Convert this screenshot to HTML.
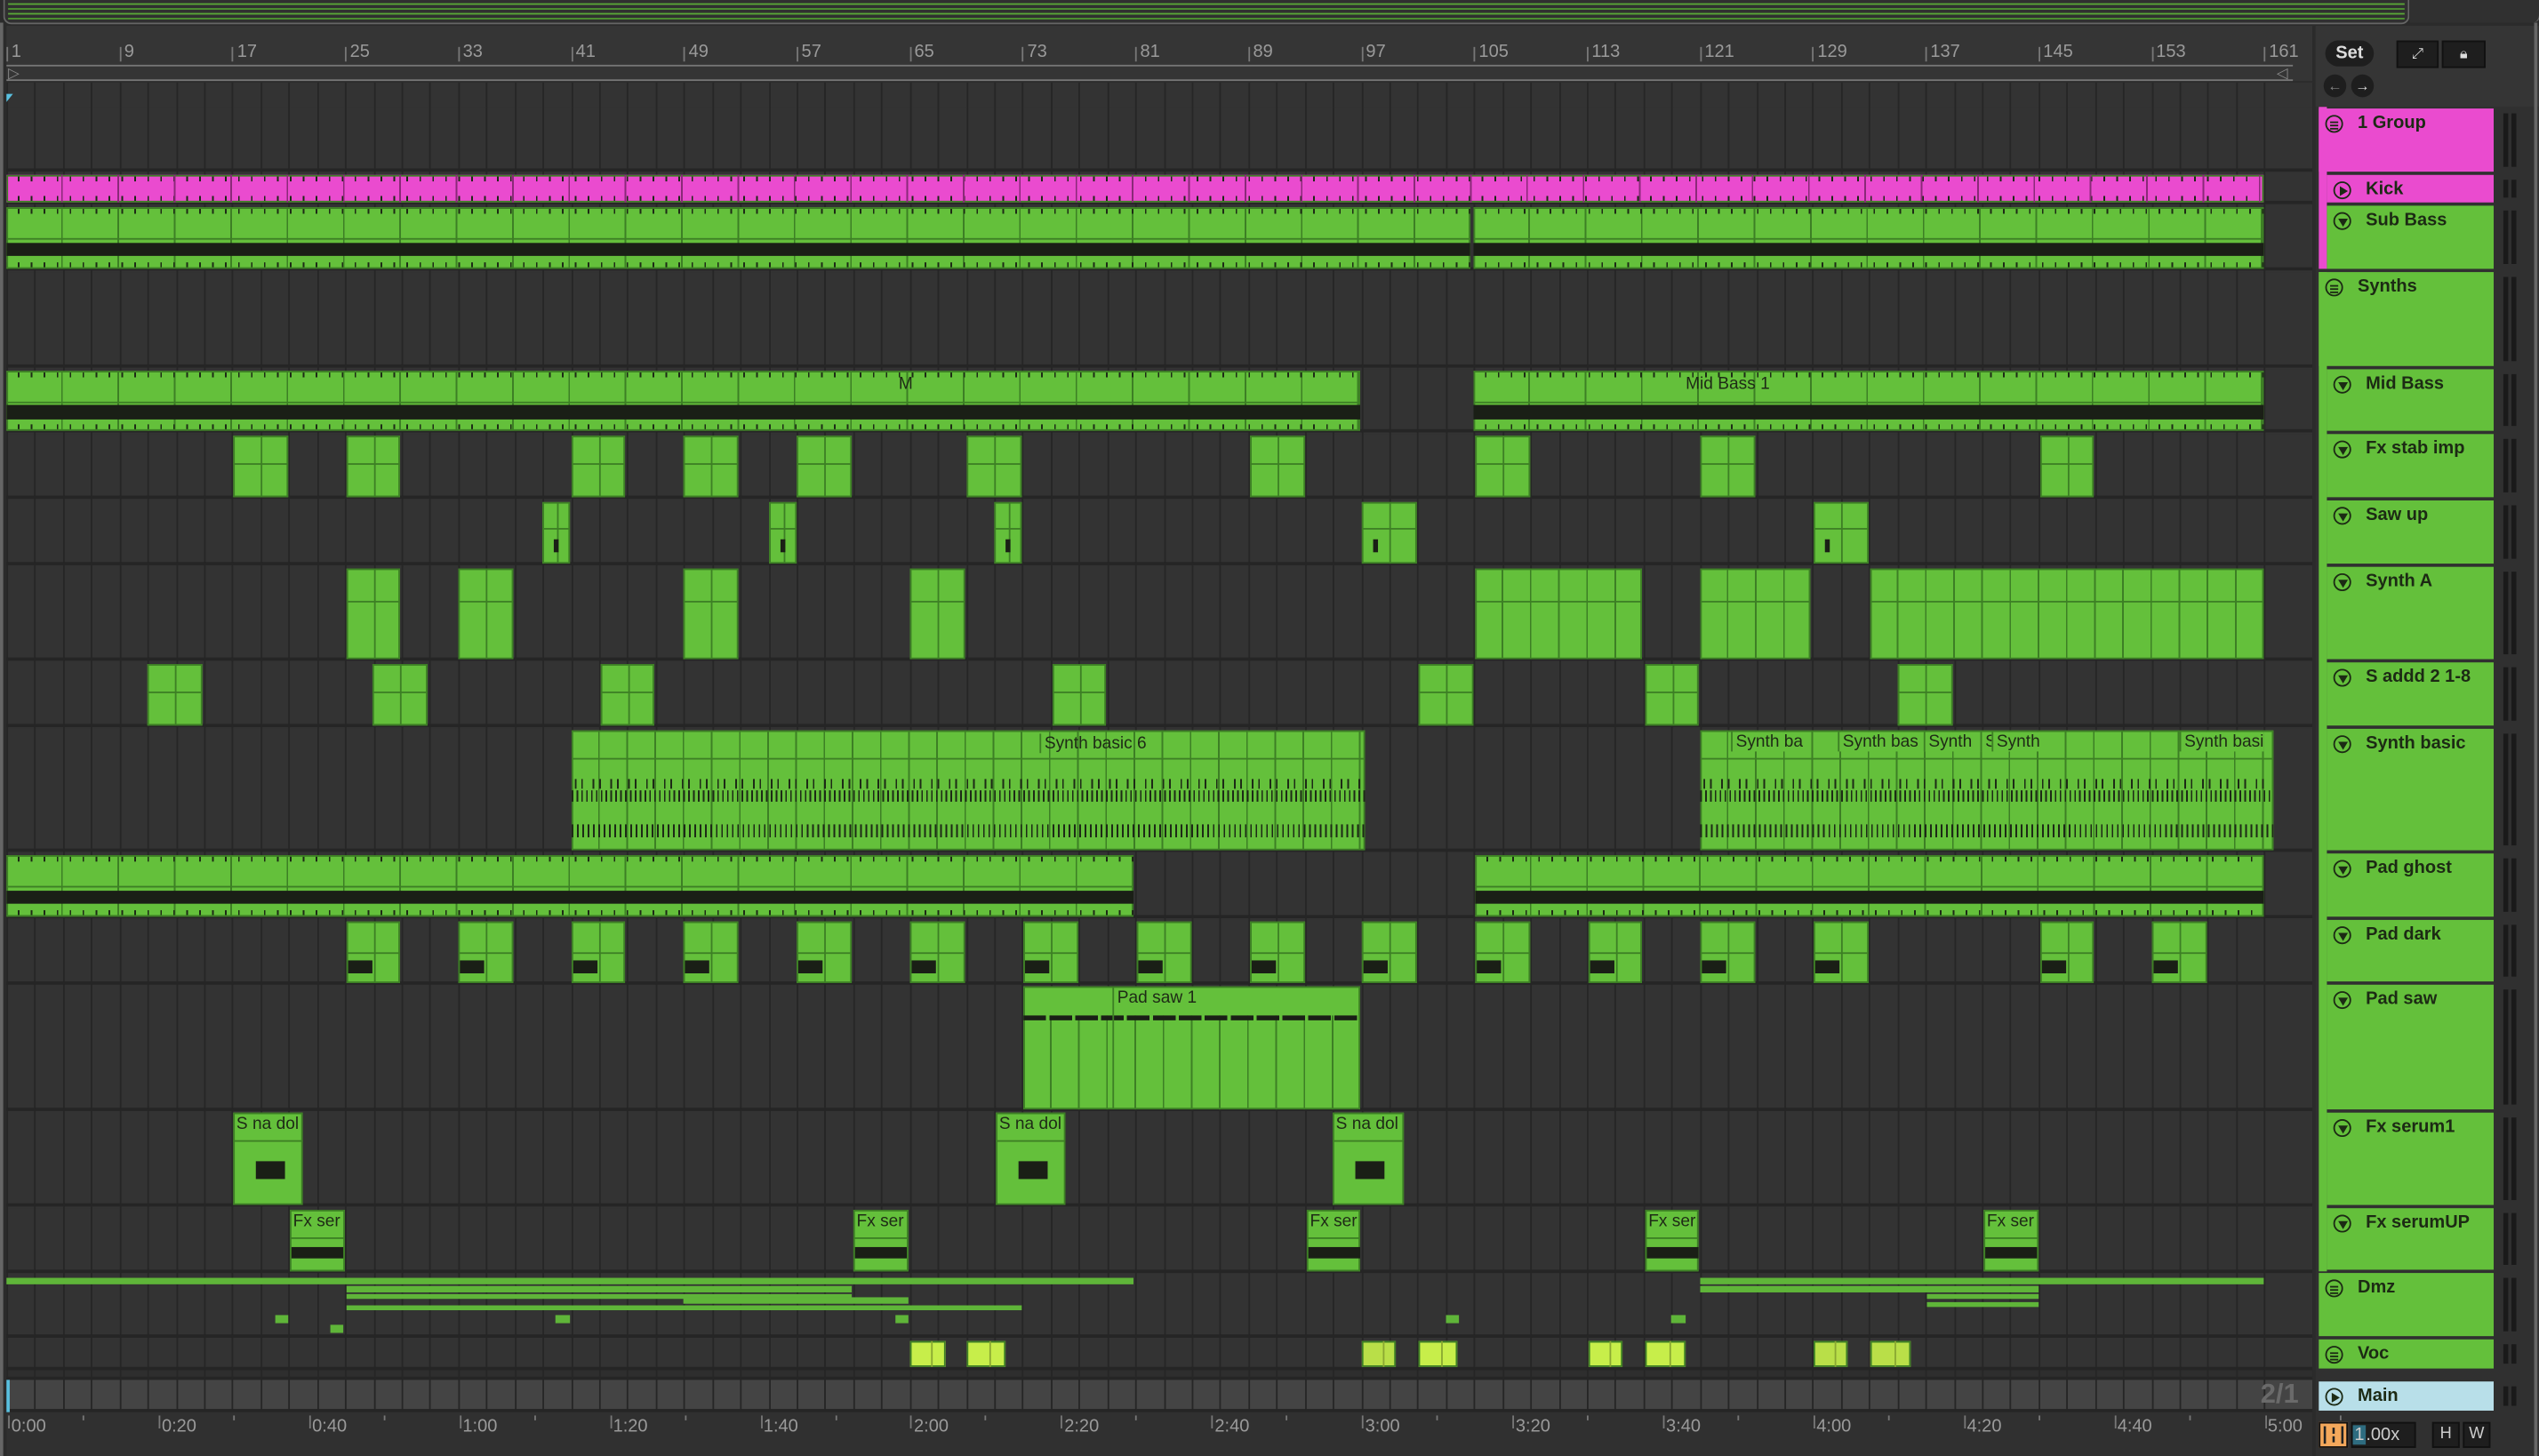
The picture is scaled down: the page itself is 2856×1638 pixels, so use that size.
<!DOCTYPE html>
<html><head><meta charset="utf-8">
<style>
html,body{margin:0;padding:0;background:#2b2b2b;overflow:hidden;width:2856px;height:1638px;}
#s{position:absolute;left:0;top:0;width:1568px;height:899px;transform-origin:0 0;transform:scale(1.82143,1.8220);background:#2b2b2b;font-family:"Liberation Sans",sans-serif;}
.a{position:absolute;}
.clip{position:absolute;background:#64c03b;box-shadow:inset 0 0 0 1px #3d7f25;overflow:hidden;}
.lbl{position:absolute;left:2px;top:1px;font-size:10.5px;color:#1e2a16;white-space:nowrap;}
.hd{position:absolute;font-size:11px;font-weight:bold;color:#1c2a14;white-space:nowrap;}
.ic{position:absolute;width:11px;height:11px;border:1.3px solid #1c2a14;border-radius:50%;box-sizing:border-box;}
.rn{position:absolute;top:26px;font-size:11px;color:#9a9a9a;}
.tn{position:absolute;top:875px;font-size:11px;color:#9a9a9a;}
.m{position:absolute;background:#1a1a1a;width:3px;}
</style></head><body>
<div id="s">
<!-- overview -->
<div class="a" style="left:2px;top:0;width:1484px;height:14px;border:1.5px solid #666;border-top:none;border-radius:0 0 5px 5px;background:#303030;overflow:hidden">
 <div class="a" style="left:2px;top:2px;width:1480px;height:1px;background:#5aa838"></div>
 <div class="a" style="left:2px;top:5px;width:1480px;height:1px;background:#4e9530"></div>
 <div class="a" style="left:2px;top:8px;width:1480px;height:1px;background:#5aa838"></div>
 <div class="a" style="left:2px;top:11px;width:1480px;height:1px;background:#4e9530"></div>
</div>
<div class="a" style="left:1488px;top:0;width:80px;height:14px;border-right:1.5px solid #666;border-radius:0 0 5px 0;background:#303030"></div>
<!-- ruler -->
<div class="a" style="left:4px;top:16px;width:1424px;height:34px;background:#353535"></div>
<div id="ruler"></div>
<div class="a" style="left:4px;top:40px;width:1412px;height:10px;border-top:1px solid #777;border-bottom:1px solid #777;box-sizing:border-box"></div>
<div class="a" style="left:5px;top:40px;font-size:9px;color:#888;line-height:10px">▷</div>
<div class="a" style="left:1406px;top:40px;font-size:9px;color:#888;line-height:10px">◁</div>
<!-- arrangement bg -->
<div id="arr" class="a" style="left:4px;top:51px;width:1424px;height:821px;background:#333"></div>
<div class="a" style="left:4px;top:58px;width:0;height:0;border-left:4px solid #59c0e0;border-bottom:5px solid transparent"></div>
<div id="clips"></div>
<!-- right panel -->
<div class="a" style="left:1430px;top:16px;width:138px;height:50px;background:#353535"></div>
<div class="a" style="left:1436px;top:25px;width:30px;height:16px;border-radius:8px;background:#1e1e1e;color:#ddd;font-size:11px;text-align:center;line-height:16px;font-weight:bold">Set</div>
<div class="a" style="left:1480px;top:25px;width:24px;height:15px;background:#1e1e1e;border:1px solid #111;color:#ddd;font-size:9px;text-align:center;line-height:15px">⤢</div>
<div class="a" style="left:1508px;top:25px;width:25px;height:15px;background:#1e1e1e;border:1px solid #111;color:#ddd;font-size:9px;text-align:center;line-height:15px">🔒︎</div>
<div class="a" style="left:1435px;top:46px;width:14px;height:14px;border-radius:50%;background:#1e1e1e;color:#888;font-size:9px;text-align:center;line-height:14px">←</div>
<div class="a" style="left:1452px;top:46px;width:14px;height:14px;border-radius:50%;background:#1e1e1e;color:#ddd;font-size:9px;text-align:center;line-height:14px">→</div>
<div id="hdrs"></div>
<!-- bottom -->
<div class="a" style="left:4px;top:872px;width:1424px;height:27px;background:#303030"></div>
<div id="time"></div>
<div class="a" style="left:1396px;top:851px;font-size:17px;font-weight:bold;color:#6a6a6a">2/1</div>
<div class="a" style="left:1432px;top:878px;width:16px;height:14px;background:#f4a85b;border:1px solid #111;color:#222;font-size:9px;text-align:center;line-height:14px">┃╏┃</div>
<div class="a" style="left:1452px;top:878px;width:38px;height:14px;background:#1e1e1e;border:1px solid #111;color:#ccc;font-size:11px;line-height:14px"><span style="background:#2e6c80;padding:0 1px">1</span>.00x</div>
<div class="a" style="left:1502px;top:878px;width:15px;height:14px;background:#1e1e1e;border:1px solid #111;color:#ccc;font-size:10px;text-align:center;line-height:14px">H</div>
<div class="a" style="left:1521px;top:878px;width:15px;height:14px;background:#1e1e1e;border:1px solid #111;color:#ccc;font-size:10px;text-align:center;line-height:14px">W</div>
<div class="a" style="left:1565px;top:14px;width:2px;height:885px;background:#666"></div>
<div class="a" style="left:0;top:14px;width:2px;height:885px;background:#666"></div>
</div>
<script>
function X(b){return 8+(b-1)*8.714;}
var H='';
// ruler numbers
[1,9,17,25,33,41,49,57,65,73,81,89,97,105,113,121,129,137,145,153,161].forEach(function(n){var x=X(n)-4;
H+='<div class="a" style="left:'+x+'px;top:29px;width:1px;height:9px;background:#777"></div><div class="rn" style="left:'+(x+3)+'px">'+n+'</div>';});
document.getElementById('ruler').innerHTML=H;
// rows
var rows=[[66,106],[107,126],[127,167],[168,227],[228,267],[268,308],[309,349],[350,408],[409,449],[450,526],[527,567],[568,608],[608,686],[686,745],[746,786],[786,826],[826,846],[846,852],[852,872]];
H='';
for(var i=0;i<rows.length;i++){var r=rows[i];var bg=(i==18)?'#444':(i==17?'#2e2e2e':'#333');
H+='<div class="a" style="left:0;top:'+(r[0]-51)+'px;width:1424px;height:'+(r[1]-r[0]-2)+'px;background:'+bg+'"></div>';}
for(var g=1;g<=161;g+=2){var x=X(g)-4-4;H+='<div class="a" style="left:'+x+'px;top:0;width:1px;height:821px;background:#262626"></div>';}
for(var i=0;i<rows.length;i++){H+='<div class="a" style="left:0;top:'+(rows[i][1]-53)+'px;width:1424px;height:2px;background:#252525"></div>';}
document.getElementById('arr').innerHTML=H;
// clips
H='';
function clip(x1,x2,y1,y2,col,inner,lab,lx){H+='<div class="clip" style="left:'+x1+'px;top:'+y1+'px;width:'+(x2-x1)+'px;height:'+(y2-y1)+'px;background:'+(col||'#64c03b')+'">'+(inner||'')+(lab?'<div class="lbl" style="left:'+(lx||2)+'px">'+lab+'</div>':'')+'</div>';}
var ticks='background-image:repeating-linear-gradient(90deg,transparent 0,transparent 7px,#1d2a16 7px,#1d2a16 8px);';
var bars='<div class="a" style="left:0;top:0;width:100%;height:100%;background-image:repeating-linear-gradient(90deg,transparent 0,transparent 33.8px,#3d7f25 33.8px,#3d7f25 34.8px)"></div>';
function bass(x1,x2,y1,y2){var h=y2-y1;
clip(x1,x2,y1,y2,null,bars+'<div class="a" style="left:0;top:'+(h*0.58)+'px;width:100%;height:'+(h*0.22)+'px;background:#1a1f16"></div><div class="a" style="left:0;top:'+(h*0.5)+'px;width:100%;height:1px;background:#3d7f25"></div><div class="a" style="left:0;top:1px;width:100%;height:3px;'+ticks+'"></div><div class="a" style="left:0;bottom:1px;width:100%;height:3px;'+ticks+'"></div>');}
clip(4,1398,108,125,'#ea4bcf','<div class="a" style="left:0;top:1px;width:100%;height:3px;'+ticks+'"></div><div class="a" style="left:0;bottom:1px;width:100%;height:3px;'+ticks+'"></div>'+bars.replace(/#3d7f25/g,'#8a2a78'));
bass(4,908,128,166);bass(910,1398,128,166);
bass(4,840,229,266);bass(910,1398,229,266);
H+='<div class="lbl" style="position:absolute;left:555px;top:231px">M</div><div class="lbl" style="position:absolute;left:1041px;top:231px">Mid Bass 1</div>';
function blocks(list,y1,y2,inn){list.forEach(function(b){clip(b[0],b[1],y1,y2,null,'<div class="a" style="left:'+((b[1]-b[0])/2)+'px;top:0;width:1px;height:100%;background:#3d7f25"></div>'+(inn?inn:''));});}
blocks([[144,178],[214,247],[353,386],[422,456],[492,526],[597,631],[772,806],[911,945],[1050,1084],[1260,1293]],269,307,'<div class="a" style="left:0;top:17px;width:100%;height:1px;background:#3d7f25"></div>');
blocks([[335,352],[475,492],[614,631],[841,875],[1120,1154]],310,348,'<div class="a" style="left:7px;top:23px;width:3px;height:8px;background:#1a1f16"></div><div class="a" style="left:0;top:16px;width:100%;height:1px;background:#3d7f25"></div>');
blocks([[214,247],[283,317],[422,456],[562,596]],351,407,'<div class="a" style="left:0;top:20px;width:100%;height:1px;background:#3d7f25"></div>');
[[911,1014],[1050,1118],[1155,1398]].forEach(function(b){clip(b[0],b[1],351,407,null,'<div class="a" style="left:0;top:0;width:100%;height:100%;background-image:repeating-linear-gradient(90deg,transparent 0,transparent 16.4px,#3d7f25 16.4px,#3d7f25 17.4px)"></div><div class="a" style="left:0;top:20px;width:100%;height:1px;background:#3d7f25"></div>');});
blocks([[91,125],[230,264],[371,404],[650,683],[876,910],[1016,1049],[1172,1206]],410,448,'<div class="a" style="left:0;top:17px;width:100%;height:1px;background:#3d7f25"></div>');
var sb='<div class="a" style="left:0;top:17px;width:100%;height:1px;background:#3d7f25"></div><div class="a" style="left:0;top:0;width:100%;height:100%;background-image:repeating-linear-gradient(90deg,transparent 0,transparent 16.4px,#3d7f25 16.4px,#3d7f25 17.4px)"></div>'+
'<div class="a" style="left:2px;top:30px;width:100%;height:6px;background-image:repeating-linear-gradient(90deg,#1d2a16 0,#1d2a16 1px,transparent 1px,transparent 4px,#1d2a16 4px,#1d2a16 5px,transparent 5px,transparent 11px)"></div>'+
'<div class="a" style="left:0;top:37px;width:100%;height:7px;background-image:repeating-linear-gradient(90deg,#1d2a16 0,#1d2a16 1px,transparent 1px,transparent 3px)"></div>'+
'<div class="a" style="left:0;top:58px;width:100%;height:8px;background-image:repeating-linear-gradient(90deg,#1d2a16 0,#1d2a16 1px,transparent 1px,transparent 3.3px)"></div>';
clip(353,843,451,525,null,sb);
H+='<div class="lbl" style="position:absolute;left:642px;top:453px;border-left:1px solid #3d7f25;padding-left:2px">Synth basic 6</div>';
clip(1050,1404,451,525,null,sb);
[[1069,'Synth ba'],[1135,'Synth bas'],[1188,'Synth'],[1223,'S'],[1230,'Synth'],[1346,'Synth basi']].forEach(function(l){H+='<div class="lbl" style="position:absolute;left:'+l[0]+'px;top:452px;border-left:1px solid #3d7f25;padding-left:2px;background:#64c03b">'+l[1]+'</div>';});
bass(4,700,528,566);bass(911,1398,528,566);
blocks([[214,247],[283,317],[353,386],[422,456],[492,526],[562,596],[632,666],[702,736],[772,806],[841,875],[911,945],[981,1014],[1050,1084],[1120,1154],[1260,1293],[1329,1363]],569,607,'<div class="a" style="left:1px;top:24px;width:15px;height:8px;background:#1a1f16"></div><div class="a" style="left:0;top:19px;width:100%;height:1px;background:#3d7f25"></div>');
clip(632,840,609,685,null,'<div class="a" style="left:0;top:0;width:100%;height:100%;background-image:repeating-linear-gradient(90deg,transparent 0,transparent 16.4px,#3d7f25 16.4px,#3d7f25 17.4px);top:18px"></div><div class="a" style="left:0;top:18px;width:100%;height:3px;background-image:repeating-linear-gradient(90deg,#1a1f16 0,#1a1f16 14px,transparent 14px,transparent 16px)"></div><div class="a" style="left:55px;top:0;width:1px;height:100%;background:#3d7f25"></div>','Pad saw 1',58);
[[144,187],[615,658],[823,867]].forEach(function(b){clip(b[0],b[1],687,744,null,'<div class="a" style="left:0;top:17px;width:100%;height:1px;background:#3d7f25"></div><div class="a" style="left:14px;top:30px;width:18px;height:11px;background:#1a1f16"></div>','S na dol');});
[[179,213],[527,561],[807,840],[1016,1049],[1225,1259]].forEach(function(b){clip(b[0],b[1],747,785,null,'<div class="a" style="left:0;top:17px;width:100%;height:1px;background:#3d7f25"></div><div class="a" style="left:1px;top:23px;width:32px;height:7px;background:#1a1f16"></div>','Fx ser');});
function ln(x1,x2,y,h,c){H+='<div class="a" style="left:'+x1+'px;top:'+y+'px;width:'+(x2-x1)+'px;height:'+h+'px;background:'+(c||'#5fb539')+'"></div>';}
ln(4,700,789,4);ln(1050,1398,789,4);ln(214,526,794,4);ln(214,526,799,3);ln(422,561,801,4);ln(214,631,806,3);ln(1050,1259,794,4);ln(1190,1259,799,3);ln(1190,1259,804,3);
ln(170,178,812,5);ln(204,212,818,5);ln(343,352,812,5);ln(553,561,812,5);ln(893,901,812,5);ln(1032,1041,812,5);
[[562,584,'#c7ee4a'],[597,621,'#c7ee4a'],[841,862,'#b9df48'],[876,900,'#c7ee4a'],[981,1002,'#c7ee4a'],[1016,1041,'#c7ee4a'],[1120,1141,'#b9df48'],[1155,1180,'#b9df48']].forEach(function(b){clip(b[0],b[1],828,844,b[2],'<div class="a" style="left:'+((b[1]-b[0])*0.6)+'px;top:0;width:1px;height:100%;background:#8aa832"></div>');});
H+='<div class="a" style="left:4px;top:852px;width:2px;height:20px;background:#59c0e0"></div>';
document.getElementById('clips').innerHTML=H;
// headers
H='';
var P='#ea4bcf',G='#64c03b';
function hdr(x,y1,y2,col,name,icon){H+='<div class="a" style="left:'+x+'px;top:'+y1+'px;width:'+(1540-x)+'px;height:'+(y2-y1-2)+'px;background:'+col+'"></div>';
var ic=icon=='g'?'<div style="position:absolute;left:2px;top:2.5px;width:5px;height:1px;background:#1c2a14;box-shadow:0 2px 0 #1c2a14,0 4px 0 #1c2a14"></div>':icon=='p'?'<div style="position:absolute;left:3px;top:1.5px;border-left:5px solid #1c2a14;border-top:3px solid transparent;border-bottom:3px solid transparent"></div>':'<div style="position:absolute;left:1.5px;top:2.5px;border-top:5px solid #1c2a14;border-left:3px solid transparent;border-right:3px solid transparent"></div>';
H+='<div class="ic" style="left:'+(x+4)+'px;top:'+(y1+4)+'px">'+ic+'</div><div class="hd" style="left:'+(x+(icon=="g"?24:24))+'px;top:'+(y1+3)+'px">'+name+'</div>';
H+='<div class="m" style="left:1546px;top:'+(y1+3)+'px;height:'+(y2-y1-8)+'px"></div><div class="m" style="left:1551px;top:'+(y1+3)+'px;height:'+(y2-y1-8)+'px"></div>';}
H+='<div class="a" style="left:1430px;top:66px;width:138px;height:833px;background:#303030"></div>';
H+='<div class="a" style="left:1432px;top:66px;width:5px;height:100px;background:'+P+'"></div>';
H+='<div class="a" style="left:1432px;top:168px;width:5px;height:617px;background:'+G+'"></div>';
hdr(1432,67,108,P,'1 Group','g');hdr(1437,108,127,P,'Kick','p');hdr(1437,127,168,G,'Sub Bass','t');
hdr(1432,168,228,G,'Synths','g');
[[228,268,'Mid Bass'],[268,309,'Fx stab imp'],[309,350,'Saw up'],[350,409,'Synth A'],[409,450,'S addd 2 1-8'],[450,527,'Synth basic'],[527,568,'Pad ghost'],[568,608,'Pad dark'],[608,687,'Pad saw'],[687,746,'Fx serum1'],[746,786,'Fx serumUP']].forEach(function(r){hdr(1437,r[0],r[1],G,r[2],'t');});
hdr(1432,786,827,G,'Dmz','g');hdr(1432,827,847,G,'Voc','g');
hdr(1432,853,873,'#b8dfe9','Main','p');
document.getElementById('hdrs').innerHTML=H;
// time
H='';
['0:00','0:20','0:40','1:00','1:20','1:40','2:00','2:20','2:40','3:00','3:20','3:40','4:00','4:20','4:40','5:00'].forEach(function(t,i){var x=5+i*92.9;
H+='<div class="a" style="left:'+x+'px;top:874px;width:1px;height:8px;background:#777"></div><div class="tn" style="left:'+(x+2)+'px">'+t+'</div>';
H+='<div class="a" style="left:'+(x+46)+'px;top:874px;width:1px;height:3px;background:#777"></div>';});
document.getElementById('time').innerHTML=H;
</script>
</body></html>
